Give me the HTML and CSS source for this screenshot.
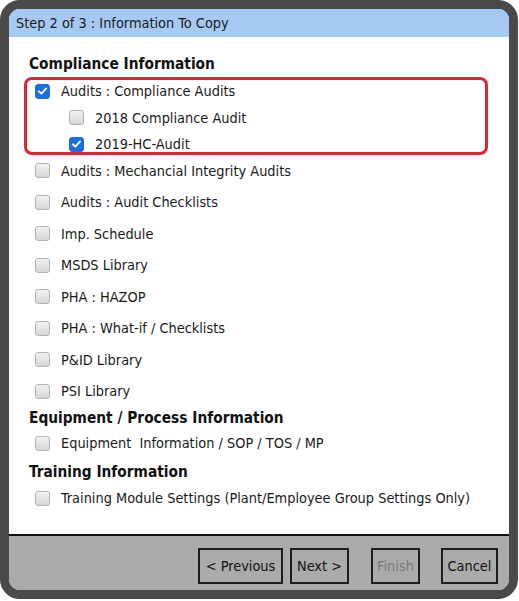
FILE: index.html
```html
<!DOCTYPE html>
<html lang="en">
<head>
  <meta charset="UTF-8">
  <title>Step 2 of 3 : Information To Copy</title>
  <link rel="stylesheet" href="styles.css">
</head>
<body>

  <div class="dialog">
    <div class="title">Step 2 of 3 : Information To Copy</div>

    <div class="content">
      <div class="section">Compliance Information</div>

      <div class="selected-group">
        <label class="row">
          <span class="check on"><svg viewBox="0 0 16 16"><path d="M3.5 8.3 L6.6 11.2 L12.5 4.8" /></svg></span>
          Audits : Compliance Audits
        </label>
        <label class="row sub">
          <span class="check"></span>
          2018 Compliance Audit
        </label>
        <label class="row sub last">
          <span class="check on"><svg viewBox="0 0 16 16"><path d="M3.5 8.3 L6.6 11.2 L12.5 4.8" /></svg></span>
          2019-HC-Audit
        </label>
      </div>

      <label class="row item"><span class="check"></span>Audits : Mechancial Integrity Audits</label>
      <label class="row item"><span class="check"></span>Audits : Audit Checklists</label>
      <label class="row item"><span class="check"></span>Imp. Schedule</label>
      <label class="row item"><span class="check"></span>MSDS Library</label>
      <label class="row item"><span class="check"></span>PHA : HAZOP</label>
      <label class="row item"><span class="check"></span>PHA : What-if / Checklists</label>
      <label class="row item"><span class="check"></span>P&amp;ID Library</label>
      <label class="row item"><span class="check"></span>PSI Library</label>

      <div class="section">Equipment / Process Information</div>
      <label class="row single"><span class="check"></span>Equipment&nbsp; Information / SOP / TOS / MP</label>

      <div class="section gap">Training Information</div>
      <label class="row single"><span class="check"></span>Training Module Settings (Plant/Employee Group Settings Only)</label>
    </div>

    <div class="footer">
      <button class="prev">&lt; Previous</button>
      <button class="next">Next &gt;</button>
      <button class="finish" disabled>Finish</button>
      <button class="cancel">Cancel</button>
    </div>
  </div>

</body>
</html>
```

FILE: styles.css
```css
body {
  margin: 0;
  background: #fff;
  font-family: 'DejaVu Sans Condensed', 'DejaVu Sans', Verdana, sans-serif;
  font-size: 14.4px;
  color: #1a1a1a;
}
.dialog {
  width: 518px;
  height: 599px;
  box-sizing: border-box;
  border: 9px solid #4a4a4a;
  border-radius: 20px;
  overflow: hidden;
  display: flex;
  flex-direction: column;
  background: #fff;
}
.title {
  height: 28px;
  line-height: 29px;
  padding-left: 7px;
  background: #a6c9f3;
  flex-shrink: 0;
}
.content {
  flex: 1;
  padding: 15px 0 0 20px;
}
.section {
  height: 22px;
  line-height: 22px;
  font-weight: bold;
  font-size: 15.3px;
  color: #111;
}
.content > .section:first-child {
  height: 24px;
  line-height: 24px;
  margin-bottom: 1px;
}
.section.gap {
  margin-top: 3px;
  height: 24px;
  line-height: 24px;
}
.selected-group {
  width: 464px;
  height: 78px;
  box-sizing: border-box;
  margin-left: -5px;
  border: 3px solid #dc2433;
  border-radius: 8px;
  padding-left: 8px;
}
.row {
  display: flex;
  align-items: center;
  gap: 11px;
  height: 26.5px;
}
.selected-group .row:first-child {
  margin-top: -2px;
}
.row.sub {
  padding-left: 34px;
}
.row.item {
  height: 31.5px;
  padding-left: 6px;
}
.row.single {
  height: 28px;
  padding-left: 6px;
}
.check {
  width: 13px;
  height: 13px;
  flex-shrink: 0;
  border: 1px solid #b4b4b4;
  border-radius: 3px;
  background: linear-gradient(#f2f2f2, #d6d6d6);
  display: flex;
  align-items: center;
  justify-content: center;
}
.check.on {
  border-color: #1b6fe0;
  background: #1b6fe0;
}
.check svg {
  width: 14px;
  height: 14px;
  fill: none;
  stroke: #fff;
  stroke-width: 2.2;
  stroke-linecap: round;
  stroke-linejoin: round;
}
.footer {
  height: 56px;
  flex-shrink: 0;
  border-top: 2px solid #111;
  background: #ababab;
  display: flex;
  justify-content: flex-end;
  align-items: flex-start;
  padding: 12px 11px 0 0;
  box-sizing: border-box;
}
button {
  height: 36px;
  background: #ababab;
  border: 2px solid #1e1e1e;
  border-radius: 0;
  font-family: inherit;
  font-size: 14.4px;
  color: #111;
  padding: 0;
}
.prev { width: 85px; }
.next { width: 59px; margin-left: 7px; }
.finish { width: 49px; margin-left: 22px; color: #7a7a7a; }
.cancel { width: 57px; margin-left: 21px; }
```
